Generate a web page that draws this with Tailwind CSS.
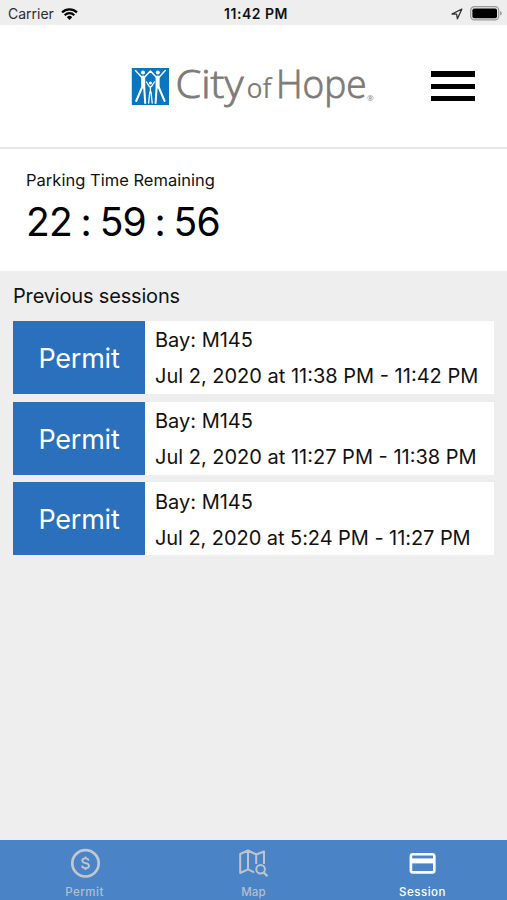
<!DOCTYPE html>
<html lang="en">
<head>
  <meta charset="UTF-8">
  <meta name="viewport" content="width=device-width, initial-scale=1.0">
  <title>City of Hope Parking</title>
  <script src="https://cdn.jsdelivr.net/npm/@tailwindcss/browser@4"></script>
</head>
<body class="h-[900px] flex flex-col overflow-hidden bg-[#eeeeee] text-[#111111] font-['Inter',sans-serif]">
  <!-- status bar -->
  <div class="h-[25px] shrink-0 grid grid-cols-3 items-center pl-2 pr-[5px] pt-[2px] text-sm leading-5 bg-[#eeeeee]">
    <div class="flex items-center gap-[7px]">
      <span class="text-[#2b2b2b]">Carrier</span>
      <svg class="w-[17px] h-3" viewBox="0 0 17 12" fill="none" stroke="#000" stroke-width="2.2">
        <path d="M1 4.4a10.6 10.6 0 0 1 15 0M3.7 7.2a6.8 6.8 0 0 1 9.6 0" />
        <path d="M8.5 12L5.8 9.2a3.8 3.8 0 0 1 5.4 0z" fill="#000" stroke="none" />
      </svg>
    </div>
    <span class="text-center font-semibold tracking-[0.5px] pl-[2px]">11:42 PM</span>
    <div class="flex items-center justify-end gap-[7px]">
      <svg class="w-3 h-3" viewBox="0 0 12 12" fill="none" stroke="#333" stroke-width="1.3" stroke-linejoin="round">
        <path d="M10.8 1.2L1 6l4.6.2.8 4.6z" />
      </svg>
      <svg class="w-8 h-[15px]" viewBox="0 0 32 15">
        <rect x=".7" y=".7" width="28" height="13.2" rx="3.6" fill="#e8e8e8" stroke="#999" stroke-width="1.2" />
        <rect x="2.4" y="2.4" width="24.6" height="9.8" rx="1.8" fill="#000" />
        <path d="M30 5v4.6q1.7-.6 1.7-2.3T30 5z" fill="#999" />
      </svg>
    </div>
  </div>

  <!-- header -->
  <header class="h-[124px] shrink-0 flex items-start bg-white border-b-2 border-[#e6e6e6] pl-[131px] pr-8">
    <svg class="mt-[24px] w-[246px] h-[72px]" viewBox="0 -10 246 72" role="img" aria-label="City of Hope">
      <rect x=".8" y="9" width="37.2" height="37" fill="#0b76c0" />
      <g fill="#fff">
        <circle cx="12" cy="13.4" r="2" />
        <circle cx="26.8" cy="13.4" r="2" />
        <circle cx="19.4" cy="24" r="1.6" />
      </g>
      <!-- two adults with raised arms, child between them -->
      <g fill="none" stroke="#fff" stroke-linecap="round" stroke-linejoin="round">
        <path d="M4.5 11.5l6.5 7h2.2l6.2-6.5 6.2 6.5h2.2l6.5-7" stroke-width="1.5" />
        <path d="M12.2 18.5v9M26.6 18.5v9" stroke-width="4" />
        <path d="M11.2 28l-6 14M13.2 28l1 16M27.6 28l6 14M25.6 28l-1 16" stroke-width="2" />
        <path d="M15.4 23l3 4.6h2l3-4.6M19.4 28v5" stroke-width="1.3" />
        <path d="M18.8 33l-1.2 11M20 33l1.2 11" stroke-width="1.3" />
      </g>
      <g fill="#7d7b79" class="font-['Open_Sans',sans-serif]">
        <text x="44.5" y="39" font-size="39" font-weight="300" stroke="#7d7b79" stroke-width=".9" textLength="68" lengthAdjust="spacingAndGlyphs">City</text>
        <text x="115.5" y="39" font-size="28" font-weight="400" textLength="25" lengthAdjust="spacingAndGlyphs">of</text>
        <text x="145" y="39" font-size="39" font-weight="300" stroke="#7d7b79" stroke-width=".9" textLength="90.5" lengthAdjust="spacingAndGlyphs">Hope</text>
        <text x="236" y="41.5" font-size="8">®</text>
      </g>
    </svg>
    <button class="ml-auto mt-[46px] flex flex-col gap-[7px]" aria-label="Menu">
      <span class="block w-11 h-[5.5px] bg-black"></span>
      <span class="block w-11 h-[5px] bg-black"></span>
      <span class="block w-11 h-[5px] bg-black"></span>
    </button>
  </header>

  <!-- timer -->
  <section class="h-[122px] shrink-0 bg-white pl-[26px] pt-5">
    <p class="text-[16.5px] leading-[22px] tracking-[0.02px]">Parking Time Remaining</p>
    <p class="mt-[6px] text-[39px] leading-[49px] tracking-[-0.9px] [word-spacing:-1.3px] text-black whitespace-nowrap">22 : 59 : 56</p>
  </section>

  <main class="flex-1 px-[13px] pt-[13px]">
    <h2 class="text-xl leading-6 tracking-[-0.17px]">Previous sessions</h2>
    <div class="mt-[13px] flex flex-col gap-[7.7px]">
      <div class="h-[73px] flex bg-white">
        <div class="w-[132px] shrink-0 flex items-center justify-center pt-[3px] bg-[#2a70bd] text-[27px] tracking-[-0.25px] text-white">Permit</div>
        <div class="pl-[10px] pt-[1px] text-xl leading-9 whitespace-nowrap">
          <p>Bay: M145</p>
          <p>Jul 2, 2020 at 11:38 PM - 11:42 PM</p>
        </div>
      </div>
      <div class="h-[73px] flex bg-white">
        <div class="w-[132px] shrink-0 flex items-center justify-center pt-[4px] bg-[#2a70bd] text-[27px] tracking-[-0.25px] text-white">Permit</div>
        <div class="pl-[10px] pt-[1px] text-xl leading-9 whitespace-nowrap">
          <p>Bay: M145</p>
          <p>Jul 2, 2020 at 11:27 PM - 11:38 PM</p>
        </div>
      </div>
      <div class="h-[73px] flex bg-white">
        <div class="w-[132px] shrink-0 flex items-center justify-center pt-[3px] bg-[#2a70bd] text-[27px] tracking-[-0.25px] text-white">Permit</div>
        <div class="pl-[10px] pt-[1.4px] text-xl leading-9 whitespace-nowrap">
          <p>Bay: M145</p>
          <p class="tracking-[-0.06px]">Jul 2, 2020 at 5:24 PM - 11:27 PM</p>
        </div>
      </div>
    </div>
  </main>

  <!-- tab bar -->
  <nav class="h-[60px] shrink-0 grid grid-cols-3 bg-[#4a84c6] text-[11.5px] leading-4 font-medium text-[#b4bfcb]">
    <a class="flex flex-col items-center pt-2">
      <svg class="w-8 h-[30px]" viewBox="0 0 32 30" fill="none" stroke="#c4c8cc">
        <circle cx="16.5" cy="15.3" r="13.2" stroke-width="2.7" />
        <path d="M19.7 12.6c-.3-1.5-1.5-2.2-3.2-2.2-1.9 0-3.2.9-3.2 2.3 0 3.4 6.7 1.6 6.7 5.1 0 1.5-1.4 2.4-3.5 2.4-2 0-3.3-.9-3.5-2.5M16.5 8.6v2M16.5 20v2" stroke-width="1.8" />
      </svg>
      <span class="mt-[6px] tracking-[0.5px]">Permit</span>
    </a>
    <a class="flex flex-col items-center pt-2">
      <svg class="w-8 h-[30px]" viewBox="0 0 32 30" fill="none" stroke="#bcc5ce" stroke-width="2" stroke-linejoin="round">
        <path d="M26 16V3.5l-7.8 3-8.2-4L2.2 6v19l7.8-3.6 6.2 3M10 2.5v18.9M18.2 6.5V16" />
        <circle cx="22.6" cy="21.3" r="4.3" />
        <path d="M25.8 24.6l3.7 3.6" stroke-width="2.2" />
      </svg>
      <span class="mt-[6px] tracking-[0.2px]">Map</span>
    </a>
    <a class="flex flex-col items-center pt-2 text-white">
      <svg class="w-8 h-[30px]" viewBox="0 0 32 30" fill="none" stroke="#fff">
        <rect x="3.9" y="6.2" width="23.4" height="18.2" rx="2" stroke-width="2.6" />
        <path d="M3.5 12.9h24" stroke-width="5" />
      </svg>
      <span class="mt-[6px] tracking-[0.5px]">Session</span>
    </a>
  </nav>
</body>
</html>
